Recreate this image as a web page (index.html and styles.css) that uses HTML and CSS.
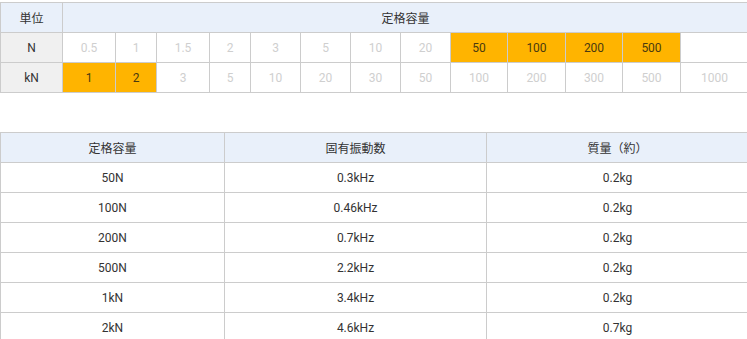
FILE: index.html
```html
<!DOCTYPE html>
<html lang="ja">
<head>
<meta charset="utf-8">
<link rel="stylesheet" href="styles.css">
</head>
<body>
<div class="wrap">
<table class="range">
<colgroup>
<col class="c62"><col class="c53"><col class="c41"><col class="c53"><col class="c41">
<col class="c50"><col class="c50"><col class="c50"><col class="c50">
<col class="c57"><col class="c58"><col class="c57"><col class="c58"><col class="c68">
</colgroup>
<tr><th class="unit">単位</th><th colspan="13">定格容量</th></tr>
<tr><td class="unit">N</td>
<td class="off">0.5</td><td class="off">1</td><td class="off">1.5</td><td class="off">2</td><td class="off">3</td><td class="off">5</td><td class="off">10</td><td class="off">20</td>
<td class="on">50</td><td class="on">100</td><td class="on">200</td><td class="on">500</td><td></td></tr>
<tr><td class="unit">kN</td>
<td class="on">1</td><td class="on">2</td>
<td class="off">3</td><td class="off">5</td><td class="off">10</td><td class="off">20</td><td class="off">30</td><td class="off">50</td><td class="off">100</td><td class="off">200</td><td class="off">300</td><td class="off">500</td><td class="off">1000</td></tr>
</table>
</div>
<div class="wrap spec-wrap">
<table class="spec">
<colgroup><col class="s30"><col class="s35"><col class="s35"></colgroup>
<tr><th>定格容量</th><th>固有振動数</th><th>質量（約）</th></tr>
<tr><td>50N</td><td>0.3kHz</td><td>0.2kg</td></tr>
<tr><td>100N</td><td>0.46kHz</td><td>0.2kg</td></tr>
<tr><td>200N</td><td>0.7kHz</td><td>0.2kg</td></tr>
<tr><td>500N</td><td>2.2kHz</td><td>0.2kg</td></tr>
<tr><td>1kN</td><td>3.4kHz</td><td>0.2kg</td></tr>
<tr><td>2kN</td><td>4.6kHz</td><td>0.7kg</td></tr>
</table>
</div>
</body>
</html>
```
FILE: styles.css
```css
html, body {
  margin: 0;
  padding: 0;
  background: #fff;
}
body {
  font-family: Roboto, "Noto Sans CJK JP", sans-serif;
  font-size: 12px;
  color: #333;
  overflow: hidden;
}
.wrap {
  overflow: hidden;
  padding-top: 2px;
}
.spec-wrap {
  padding-top: 39px;
}
table {
  border-collapse: collapse;
  table-layout: fixed;
}
.range {
  width: 748px;
}
.spec {
  width: 748px;
}
th, td {
  border: 1px solid #cccccc;
  height: 29px;
  padding: 0;
  text-align: center;
  vertical-align: middle;
  font-weight: normal;
  color: #333;
  white-space: nowrap;
}
th {
  background: #e9f0fa;
}
td.unit {
  background: #f0f0f0;
}
th.unit {
  background: #e9f0fa;
}
td.off {
  color: #cfcfcf;
}
td.on {
  background: #ffb400;
  color: #4a3a10;
}
.c62 { width: 62px; }
.c53 { width: 53px; }
.c41 { width: 41px; }
.c50 { width: 50px; }
.c57 { width: 57px; }
.c58 { width: 58px; }
.c68 { width: 68px; }
.s30 { width: 224px; }
.s35 { width: 262px; }
```
